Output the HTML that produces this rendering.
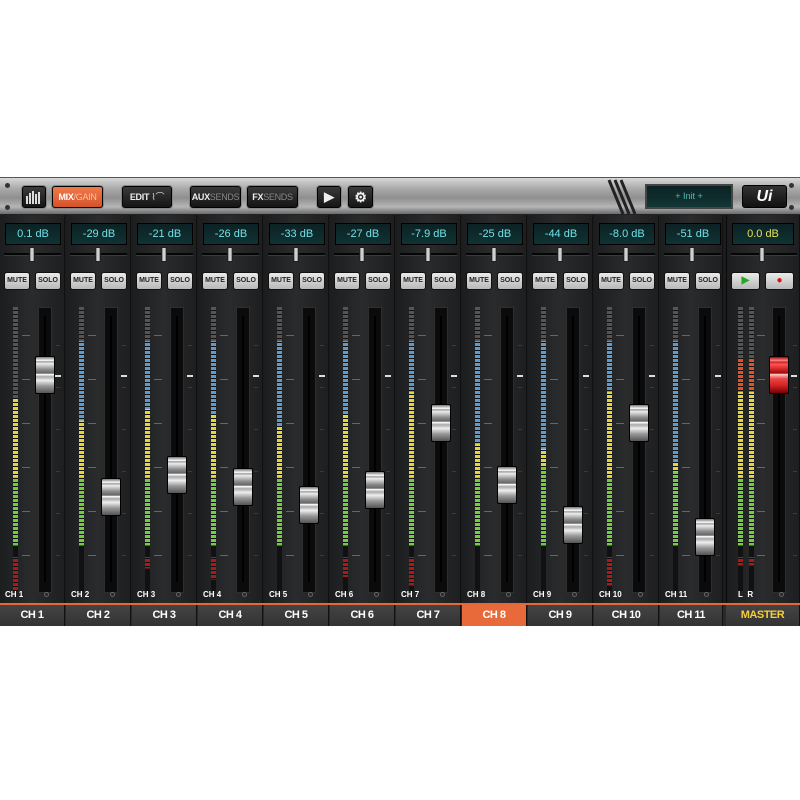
<!DOCTYPE html>
<html><head><meta charset="utf-8"><style>
*{margin:0;padding:0;box-sizing:border-box}
body{width:800px;height:800px;background:#fff;position:relative;overflow:hidden;font-family:"Liberation Sans",sans-serif}
.a{position:absolute}
#tb{left:0;top:177px;width:800px;height:38px;background:linear-gradient(#d8d8d8,#a9a9a9 30%,#8f8f8f 55%,#b5b5b5 80%,#6a6a6a);border-top:1px solid #555;border-bottom:1px solid #222}
.btn{position:absolute;top:8px;height:22px;background:linear-gradient(#3a3a3a,#151515);border:1px solid #000;border-radius:3px;box-shadow:0 0 0 1px #888;color:#eee;font-weight:bold;font-size:9px;line-height:20px;text-align:center;letter-spacing:-0.3px}
.btn span{color:#888;font-weight:normal}
#main{left:0;top:215px;width:800px;height:389px;background:#1b1c1d}
.s{position:absolute;top:215px;width:65px;height:389px;background:linear-gradient(90deg,#1c1d1e,#2a2b2c 50%,#1e1f20);border-right:1px solid #101010}
.d{position:absolute;left:5px;top:8px;width:56px;height:22px;background:linear-gradient(#0c2223,#103233);border:1px solid #000;color:#6fe0e6;font-size:11px;line-height:20px;text-align:center;font-family:"Liberation Sans Narrow","Liberation Sans",sans-serif}
.pl{position:absolute;left:4px;top:38px;width:57px;height:3px;background:#050505;border-bottom:1px solid #3a3a3a}
.pk{position:absolute;left:29px;top:32px;width:6px;height:15px;background:linear-gradient(90deg,#777,#eee,#777);border:1px solid #222}
.m,.so{position:absolute;top:57px;width:26px;height:18px;background:linear-gradient(#eaeaea,#b8b8b8);border:1px solid #111;border-radius:3px;color:#222;font-size:7px;line-height:16px;text-align:center;font-weight:bold}
.m{left:4px}.so{left:35px}
.mt{position:absolute;left:13px;top:92px;width:5px;height:284px;background:repeating-linear-gradient(#0000 0 3px,#111 3px 4px),linear-gradient(#555 0,#555 100%)}
.sc{position:absolute;left:22px;top:92px;width:8px;height:284px;background:repeating-linear-gradient(#0000 0 28px,#666 28px 29px,#0000 29px 44px)}
.tr{position:absolute;left:38px;top:92px;width:14px;height:286px;background:#0b0b0b;border:1px solid #2e2e2e}
.tr:after{content:"";position:absolute;left:5px;top:8px;width:2px;height:266px;background:#000}
.tk{position:absolute;left:56px;top:100px;width:4px;height:270px;background:repeating-linear-gradient(#0000 0 30px,#3a3a3a 30px 31px,#0000 31px 42px)}
.ind{position:absolute;left:55px;top:160px;width:6px;height:2px;background:#ddd}
.f{position:absolute;left:35px;width:20px;height:38px;border-radius:2px;background:linear-gradient(#777,#fff 10%,#999 13%,#eee 18%,#888 35%,#666 45%,#fff 48%,#aaa 55%,#eee 65%,#999 80%,#555);border:1px solid #000}
.fr{background:linear-gradient(#a00,#f88 10%,#c22 14%,#f55 20%,#b11 40%,#911 45%,#fcc 48%,#e44 60%,#c22 80%,#700)}
.cl{position:absolute;left:5px;top:375px;color:#fff;font-size:8px;font-weight:bold}
.cp{position:absolute;left:44px;top:377px;width:5px;height:5px;border:1px solid #666;border-radius:50%}
#lb{left:0;top:603px;width:800px;height:23px;background:#2a2a2a;border-top:2px solid #e8673a}
.l{position:absolute;top:605px;height:21px;width:65px;background:linear-gradient(#444,#333);border-right:1px solid #111;color:#fff;font-weight:bold;font-size:11px;line-height:21px;text-align:center;letter-spacing:-0.5px}
</style></head><body>
<div id="tb" class="a">
<div class="a" style="left:5px;top:5px;width:5px;height:5px;border-radius:50%;background:#333"></div>
<div class="a" style="left:5px;top:27px;width:5px;height:5px;border-radius:50%;background:#333"></div>
<div class="a" style="left:789px;top:5px;width:5px;height:5px;border-radius:50%;background:#333"></div>
<div class="a" style="left:789px;top:27px;width:5px;height:5px;border-radius:50%;background:#333"></div>
<div class="btn" style="left:22px;width:24px"><svg width="18" height="14" viewBox="0 0 18 14" style="margin-top:3px"><g fill="#ddd"><rect x="1" y="6" width="2" height="8"/><rect x="4" y="3" width="2" height="11"/><rect x="7" y="1" width="2" height="13"/><rect x="10" y="4" width="2" height="10"/><rect x="13" y="2" width="2" height="12"/></g></svg></div>
<div class="btn" style="left:52px;width:51px;background:linear-gradient(#f07a4a,#d4532a);color:#fff">MIX<span style="color:#ffc3a6">/GAIN</span></div>
<div class="btn" style="left:122px;width:50px">EDIT <span style="color:#ddd">⌇⌒</span></div>
<div class="btn" style="left:190px;width:51px">AUX<span>SENDS</span></div>
<div class="btn" style="left:247px;width:51px">FX<span>SENDS</span></div>
<div class="btn" style="left:317px;width:24px;font-size:13px">▶</div>
<div class="btn" style="left:348px;width:25px;font-size:14px">⚙</div>
<svg class="a" style="left:605px;top:0" width="32" height="38"><g stroke="#222" stroke-width="3"><line x1="4" y1="2" x2="18" y2="36"/><line x1="10" y1="2" x2="24" y2="36"/><line x1="16" y1="2" x2="30" y2="36"/></g></svg>
<div class="a" style="left:645px;top:6px;width:88px;height:25px;background:linear-gradient(#0c2223,#123536);border:2px solid #444;color:#59b8b8;font-size:9px;text-align:center;line-height:21px">+ Init +</div>
<div class="a" style="left:742px;top:7px;width:45px;height:23px;background:linear-gradient(#333,#111);border:1px solid #000;border-radius:3px;color:#fff;font-weight:bold;font-style:italic;font-size:16px;text-align:center;line-height:21px">Ui</div>
</div>
<div id="main" class="a"></div>

<div class="s" style="left:0"><div class="d">0.1 dB</div><div class="pl"></div><div class="pk"></div><div class="m">MUTE</div><div class="so">SOLO</div><div class="mt" style="background:repeating-linear-gradient(#0000 0 3px,#111 3px 4px),linear-gradient(#555 0 32%,#e3d53a 32% 60%,#6fcf3a 60% 84%,#111 84% 88%,#b01818 88%)"></div><div class="sc"></div><div class="tr"></div><div class="tk"></div><div class="ind"></div><div class="f" style="top:141px"></div><div class="cl">CH 1</div><div class="cp"></div></div>
<div class="s" style="left:66px"><div class="d">-29 dB</div><div class="pl"></div><div class="pk"></div><div class="m">MUTE</div><div class="so">SOLO</div><div class="mt" style="background:repeating-linear-gradient(#0000 0 3px,#111 3px 4px),linear-gradient(#555 0 12%,#5b9bd0 12% 40%,#e3d53a 40% 60%,#6fcf3a 60% 84%,#111 84%)"></div><div class="sc"></div><div class="tr"></div><div class="tk"></div><div class="ind"></div><div class="f" style="top:263px"></div><div class="cl">CH 2</div><div class="cp"></div></div>
<div class="s" style="left:132px"><div class="d">-21 dB</div><div class="pl"></div><div class="pk"></div><div class="m">MUTE</div><div class="so">SOLO</div><div class="mt" style="background:repeating-linear-gradient(#0000 0 3px,#111 3px 4px),linear-gradient(#555 0 12%,#5b9bd0 12% 36%,#e3d53a 36% 60%,#6fcf3a 60% 84%,#111 84% 88%,#b01818 88% 92%,#111 92%)"></div><div class="sc"></div><div class="tr"></div><div class="tk"></div><div class="ind"></div><div class="f" style="top:241px"></div><div class="cl">CH 3</div><div class="cp"></div></div>
<div class="s" style="left:198px"><div class="d">-26 dB</div><div class="pl"></div><div class="pk"></div><div class="m">MUTE</div><div class="so">SOLO</div><div class="mt" style="background:repeating-linear-gradient(#0000 0 3px,#111 3px 4px),linear-gradient(#555 0 12%,#5b9bd0 12% 38%,#e3d53a 38% 60%,#6fcf3a 60% 84%,#111 84% 88%,#b01818 88% 96%,#111 96%)"></div><div class="sc"></div><div class="tr"></div><div class="tk"></div><div class="ind"></div><div class="f" style="top:253px"></div><div class="cl">CH 4</div><div class="cp"></div></div>
<div class="s" style="left:264px"><div class="d">-33 dB</div><div class="pl"></div><div class="pk"></div><div class="m">MUTE</div><div class="so">SOLO</div><div class="mt" style="background:repeating-linear-gradient(#0000 0 3px,#111 3px 4px),linear-gradient(#555 0 12%,#5b9bd0 12% 42%,#e3d53a 42% 60%,#6fcf3a 60% 84%,#111 84%)"></div><div class="sc"></div><div class="tr"></div><div class="tk"></div><div class="ind"></div><div class="f" style="top:271px"></div><div class="cl">CH 5</div><div class="cp"></div></div>
<div class="s" style="left:330px"><div class="d">-27 dB</div><div class="pl"></div><div class="pk"></div><div class="m">MUTE</div><div class="so">SOLO</div><div class="mt" style="background:repeating-linear-gradient(#0000 0 3px,#111 3px 4px),linear-gradient(#555 0 12%,#5b9bd0 12% 38%,#e3d53a 38% 60%,#6fcf3a 60% 84%,#111 84% 88%,#b01818 88% 95%,#111 95%)"></div><div class="sc"></div><div class="tr"></div><div class="tk"></div><div class="ind"></div><div class="f" style="top:256px"></div><div class="cl">CH 6</div><div class="cp"></div></div>
<div class="s" style="left:396px"><div class="d">-7.9 dB</div><div class="pl"></div><div class="pk"></div><div class="m">MUTE</div><div class="so">SOLO</div><div class="mt" style="background:repeating-linear-gradient(#0000 0 3px,#111 3px 4px),linear-gradient(#555 0 12%,#5b9bd0 12% 30%,#e3d53a 30% 60%,#6fcf3a 60% 84%,#111 84% 88%,#b01818 88% 98%,#111 98%)"></div><div class="sc"></div><div class="tr"></div><div class="tk"></div><div class="ind"></div><div class="f" style="top:189px"></div><div class="cl">CH 7</div><div class="cp"></div></div>
<div class="s" style="left:462px"><div class="d">-25 dB</div><div class="pl"></div><div class="pk"></div><div class="m">MUTE</div><div class="so">SOLO</div><div class="mt" style="background:repeating-linear-gradient(#0000 0 3px,#111 3px 4px),linear-gradient(#555 0 12%,#5b9bd0 12% 48%,#e3d53a 48% 60%,#6fcf3a 60% 84%,#111 84%)"></div><div class="sc"></div><div class="tr"></div><div class="tk"></div><div class="ind"></div><div class="f" style="top:251px"></div><div class="cl">CH 8</div><div class="cp"></div></div>
<div class="s" style="left:528px"><div class="d">-44 dB</div><div class="pl"></div><div class="pk"></div><div class="m">MUTE</div><div class="so">SOLO</div><div class="mt" style="background:repeating-linear-gradient(#0000 0 3px,#111 3px 4px),linear-gradient(#555 0 12%,#5b9bd0 12% 50%,#e3d53a 50% 56%,#6fcf3a 56% 84%,#111 84%)"></div><div class="sc"></div><div class="tr"></div><div class="tk"></div><div class="ind"></div><div class="f" style="top:291px"></div><div class="cl">CH 9</div><div class="cp"></div></div>
<div class="s" style="left:594px"><div class="d">-8.0 dB</div><div class="pl"></div><div class="pk"></div><div class="m">MUTE</div><div class="so">SOLO</div><div class="mt" style="background:repeating-linear-gradient(#0000 0 3px,#111 3px 4px),linear-gradient(#555 0 12%,#5b9bd0 12% 30%,#e3d53a 30% 60%,#6fcf3a 60% 84%,#111 84% 88%,#b01818 88% 98%,#111 98%)"></div><div class="sc"></div><div class="tr"></div><div class="tk"></div><div class="ind"></div><div class="f" style="top:189px"></div><div class="cl">CH 10</div><div class="cp"></div></div>
<div class="s" style="left:660px;width:63px"><div class="d">-51 dB</div><div class="pl"></div><div class="pk"></div><div class="m">MUTE</div><div class="so">SOLO</div><div class="mt" style="background:repeating-linear-gradient(#0000 0 3px,#111 3px 4px),linear-gradient(#555 0 12%,#5b9bd0 12% 55%,#e3d53a 55% 58%,#6fcf3a 58% 84%,#111 84%)"></div><div class="sc"></div><div class="tr"></div><div class="tk"></div><div class="ind"></div><div class="f" style="top:303px"></div><div class="cl">CH 11</div><div class="cp"></div></div>
<div class="s" style="left:726px;width:74px;border-left:1px solid #0a0a0a"><div class="d" style="color:#e6e05a;width:62px">0.0 dB</div><div class="pl" style="width:66px"></div><div class="pk" style="left:32px"></div><div class="m" style="width:29px;color:#2a2;font-size:10px">▶</div><div class="so" style="left:38px;width:29px;color:#d11;font-size:10px">●</div>
<div class="mt" style="left:11px;background:repeating-linear-gradient(#0000 0 3px,#111 3px 4px),linear-gradient(#555 0 18%,#e0502a 18% 30%,#e3d53a 30% 60%,#6fcf3a 60% 84%,#111 84% 88%,#b01818 88% 91%,#111 91%)"></div>
<div class="mt" style="left:22px;background:repeating-linear-gradient(#0000 0 3px,#111 3px 4px),linear-gradient(#555 0 18%,#e0502a 18% 30%,#e3d53a 30% 60%,#6fcf3a 60% 84%,#111 84% 88%,#b01818 88% 91%,#111 91%)"></div>
<div class="sc" style="left:30px"></div><div class="tr" style="left:45px"></div><div class="tk" style="left:66px"></div><div class="ind" style="left:64px"></div><div class="f fr" style="left:42px;top:141px"></div><div class="cl" style="left:11px">L&nbsp;&nbsp;R</div><div class="cp" style="left:52px"></div></div>

<div id="lb" class="a"></div>
<div class="l" style="left:0">CH 1</div>
<div class="l" style="left:66px">CH 2</div>
<div class="l" style="left:132px">CH 3</div>
<div class="l" style="left:198px">CH 4</div>
<div class="l" style="left:264px">CH 5</div>
<div class="l" style="left:330px">CH 6</div>
<div class="l" style="left:396px">CH 7</div>
<div class="l" style="left:462px;background:#e8693a">CH 8</div>
<div class="l" style="left:528px">CH 9</div>
<div class="l" style="left:594px">CH 10</div>
<div class="l" style="left:660px;width:63px">CH 11</div>
<div class="l" style="left:726px;width:74px;color:#f2cf3a">MASTER</div>
</body></html>
